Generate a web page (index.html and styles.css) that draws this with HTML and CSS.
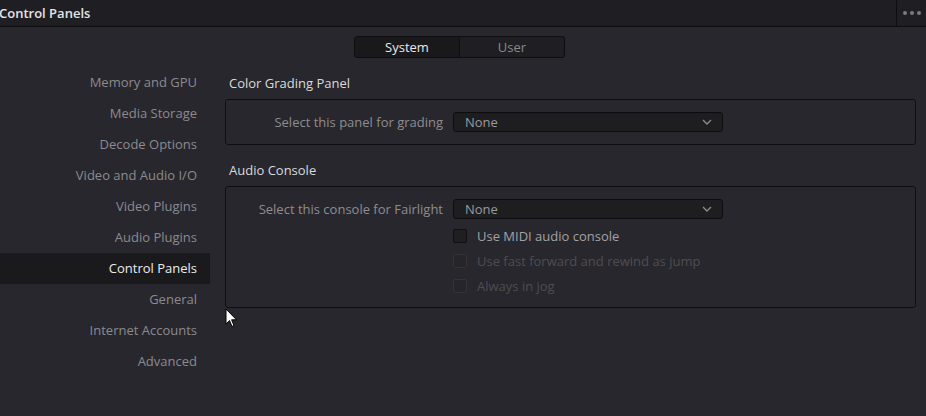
FILE: index.html
```html
<!DOCTYPE html>
<html>
<head>
<meta charset="utf-8">
<link rel="stylesheet" href="styles.css">
</head>
<body>
<div class="titlebar">
  <div class="title">Control Panels</div>
  <div class="more"><span></span><span></span><span></span></div>
</div>
<div class="tabs-row">
  <div class="tabs">
    <div class="tab active">System</div>
    <div class="tab">User</div>
  </div>
</div>
<div class="main">
  <nav class="sidebar">
    <div class="nav-item">Memory and GPU</div>
    <div class="nav-item">Media Storage</div>
    <div class="nav-item">Decode Options</div>
    <div class="nav-item">Video and Audio I/O</div>
    <div class="nav-item">Video Plugins</div>
    <div class="nav-item">Audio Plugins</div>
    <div class="nav-item active">Control Panels</div>
    <div class="nav-item">General</div>
    <div class="nav-item">Internet Accounts</div>
    <div class="nav-item">Advanced</div>
  </nav>
  <section class="content">
    <h2 class="section-title">Color Grading Panel</h2>
    <div class="group group-grading">
      <div class="field">
        <label class="field-label">Select this panel for grading</label>
        <div class="select"><span>None</span>
          <svg class="chev" width="10" height="6" viewBox="0 0 10 6"><path d="M1 1 L5 5 L9 1" fill="none" stroke="#8a8a8e" stroke-width="1.4"/></svg>
        </div>
      </div>
    </div>
    <h2 class="section-title">Audio Console</h2>
    <div class="group group-audio">
      <div class="field">
        <label class="field-label">Select this console for Fairlight</label>
        <div class="select"><span>None</span>
          <svg class="chev" width="10" height="6" viewBox="0 0 10 6"><path d="M1 1 L5 5 L9 1" fill="none" stroke="#8a8a8e" stroke-width="1.4"/></svg>
        </div>
      </div>
      <div class="checks">
        <div class="check"><span class="box"></span><span class="check-label">Use MIDI audio console</span></div>
        <div class="check disabled"><span class="box"></span><span class="check-label">Use fast forward and rewind as jump</span></div>
        <div class="check disabled"><span class="box"></span><span class="check-label">Always in jog</span></div>
      </div>
    </div>
  </section>
</div>
<svg class="cursor" width="13" height="20" viewBox="0 0 13 20"><path d="M1 1 L1 16 L4.5 12.5 L7 18.5 L9 17.6 L6.6 11.8 L11.5 11.8 Z" fill="#ffffff" stroke="#000000" stroke-width="1"/></svg>
</body>
</html>
```
FILE: styles.css
```css
html, body {
  margin: 0;
  padding: 0;
}
body {
  width: 926px;
  height: 416px;
  overflow: hidden;
  background: #28272d;
  font-family: "Open Sans", "Noto Sans", sans-serif;
  font-size: 13px;
  color: #8e8e92;
  position: relative;
}
.titlebar {
  height: 26px;
  background: #1f1e23;
  border-bottom: 1px solid #0e0e10;
  display: flex;
  align-items: center;
}
.title {
  flex: 1;
  margin-left: -1px;
  font-weight: 600;
  color: #e4e4e6;
  font-size: 13px;
  line-height: 26px;
}
.more {
  width: 29px;
  height: 26px;
  border-left: 1px solid #0e0e10;
  display: flex;
  align-items: center;
  justify-content: center;
  gap: 3px;
}
.more span {
  width: 4px;
  height: 4px;
  border-radius: 50%;
  background: #7c7c80;
}
.tabs-row {
  display: flex;
  padding-left: 354px;
  margin-top: 9px;
}
.tabs {
  display: flex;
  height: 20px;
  border: 1px solid #0e0e10;
  border-radius: 3px;
  overflow: hidden;
  background: #1f1e22;
}
.tab {
  width: 104px;
  line-height: 20px;
  text-align: center;
  color: #8a8a8e;
}
.tab.active {
  background: #19191b;
  color: #eaeaec;
  border-right: 1px solid #0e0e10;
}
.main {
  display: flex;
  margin-top: 9px;
}
.sidebar {
  width: 210px;
  display: flex;
  flex-direction: column;
}
.nav-item {
  height: 31px;
  line-height: 31px;
  text-align: right;
  padding-right: 13px;
  color: #8b8b8f;
}
.nav-item.active {
  background: #1a1a1c;
  color: #ececee;
}
.content {
  flex: 1;
  margin-left: 15px;
  margin-right: 10px;
}
.section-title {
  margin: 0;
  height: 32px;
  line-height: 32px;
  padding-left: 4px;
  font-size: 13px;
  font-weight: 400;
  color: #dadadc;
}
.group {
  border: 1px solid #0f0f11;
  border-radius: 3px;
}
.group-grading {
  padding: 12px 0 12px;
  margin-bottom: 9px;
}
.group-audio {
  padding: 12px 0 9px;
}
.field {
  display: flex;
  align-items: center;
  height: 20px;
}
.field-label {
  width: 217px;
  text-align: right;
  color: #8d8d91;
  margin-right: 10px;
}
.select {
  height: 18px;
  border: 1px solid #0d0d0f;
  border-radius: 3px;
  background: #1e1e21;
  display: flex;
  align-items: center;
  justify-content: space-between;
  padding: 0 10px 0 0;
  width: 258px;
  color: #9a9a9e;
}
.select span {
  padding-left: 11px;
}
.chev {
  display: block;
}
.checks {
  margin-top: 5px;
  padding-left: 227px;
  display: flex;
  flex-direction: column;
  gap: 1px;
}
.check {
  height: 24px;
  display: flex;
  align-items: center;
}
.box {
  width: 12px;
  height: 12px;
  border: 1px solid #101012;
  background: #1f1f22;
  border-radius: 2px;
  margin-right: 10px;
}
.check-label {
  color: #a2a2a6;
}
.check.disabled .box {
  background: #262529;
  border-color: #333237;
}
.check.disabled .check-label {
  color: #4d4d52;
}
.cursor {
  position: absolute;
  left: 225px;
  top: 308px;
}
```
